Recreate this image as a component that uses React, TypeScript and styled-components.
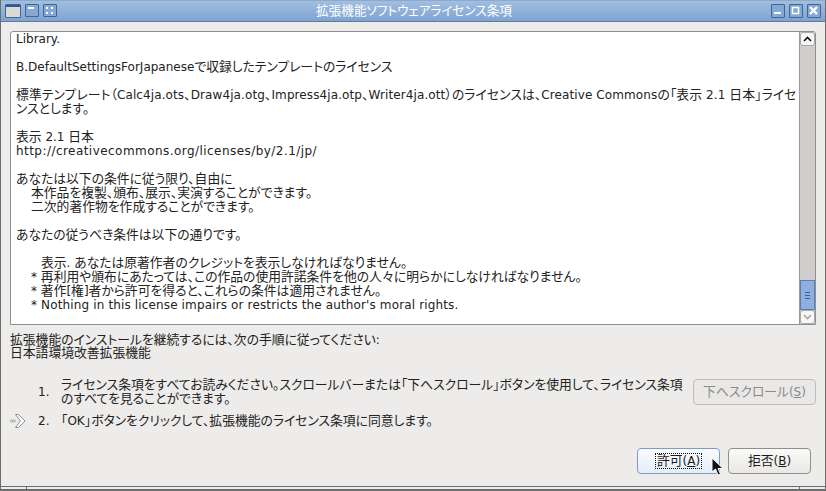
import React from "react";
import styled, { createGlobalStyle } from "styled-components";

const GlobalStyle = createGlobalStyle`
  html, body {
    margin: 0;
    padding: 0;
    background: #edecea;
  }
  body {
    font-family: "DejaVu Sans", "Noto Sans CJK JP", sans-serif;
    font-size: 12px;
    font-feature-settings: "palt";
    color: #1a1a1a;
  }
`;

const Window = styled.div`
  width: 826px;
  height: 491px;
  display: flex;
  flex-direction: column;
  overflow: hidden;
  position: relative;
  box-sizing: border-box;
  border-left: 1px solid #6d6d6d;
  border-right: 1px solid #6d6d6d;
`;

const TitleBar = styled.div`
  height: 22px;
  flex: none;
  box-sizing: border-box;
  margin: 0 -1px;
  display: flex;
  align-items: center;
  padding: 0 5px;
  gap: 4px;
  background: linear-gradient(#a3c0e2, #7fa3d1);
  border-bottom: 1px solid #5f7da3;
  box-shadow: inset 0 1px 0 #8fa9c9;
`;

const Title = styled.div`
  flex: 1;
  text-align: center;
  color: #fff;
  font-size: 12.6px;
  line-height: 14px;
`;

const TitleButton = styled.div<{ $w?: number; $h?: number }>`
  width: ${(p) => p.$w ?? 14}px;
  height: ${(p) => p.$h ?? 14}px;
  box-sizing: border-box;
  border: 1px solid #3f6690;
  border-radius: 1px;
  display: grid;
  place-items: center;
  flex: none;
  background: #87a8d3;
  overflow: hidden;
`;

const Body = styled.div`
  flex: 1;
  display: flex;
  flex-direction: column;
  padding: 9px 9px 0;
  min-height: 0;
`;

const TextBox = styled.div`
  height: 294px;
  flex: none;
  box-sizing: border-box;
  display: flex;
  background: #fff;
  border: 1px solid #8f8f8f;
  border-radius: 3px 3px 0 0;
`;

const LicenseText = styled.div`
  flex: 1;
  padding: 0 5px;
  overflow: hidden;
  color: #222;
`;

const LicenseLine = styled.div<{ $indent?: number; $track?: number }>`
  height: 14px;
  line-height: 14px;
  white-space: pre;
  padding-left: ${(p) => p.$indent ?? 0}px;
  letter-spacing: ${(p) => p.$track ?? 0}px;
`;

// kanji and kana in the reference are set a little larger than the latin text
const Ja = styled.span`
  font-size: 12.8px;
  line-height: 1;
`;

const ScrollBar = styled.div`
  width: 15px;
  flex: none;
  display: flex;
  flex-direction: column;
  background: #cfcecc;
  border-left: 1px solid #9a9a9a;
`;

const ScrollArrow = styled.div`
  height: 14px;
  flex: none;
  background: #f7f7f6;
  border: 1px solid #a8a8a8;
  border-radius: 3px;
  box-sizing: border-box;
  display: grid;
  place-items: center;
`;

const ScrollTrack = styled.div`
  flex: 1;
  display: flex;
  flex-direction: column;
  justify-content: flex-end;
`;

const ScrollThumb = styled.div`
  height: 30px;
  box-sizing: border-box;
  background: #8db0e0;
  border: 1px solid #5c7fae;
  display: flex;
  flex-direction: column;
  align-items: center;
  justify-content: center;
  gap: 2px;
`;

const ThumbLine = styled.div`
  width: 5px;
  height: 1px;
  background: #3d5f8d;
`;

const Intro = styled.div`
  margin-top: 9px;
  line-height: 13px;
  color: #222;
`;

const Steps = styled.div`
  margin-top: 18px;
  display: flex;
  flex-direction: column;
  gap: 7px;
`;

const Step = styled.div`
  display: grid;
  grid-template-columns: 28px 23px 632px 123px;
  align-items: center;
  line-height: 14px;
  color: #222;
  white-space: nowrap;
`;

const StepIcon = styled.div`
  display: flex;
  align-items: center;
`;

const ButtonBase = styled.button<{ $focus?: boolean }>`
  box-sizing: border-box;
  font-family: inherit;
  font-size: 12px;
  font-feature-settings: inherit;
  color: #1a1a1a;
  padding: 0;
  height: 26px;
  border: 1px solid ${(p) => (p.$focus ? "#7f9cc4" : "#8f8f8f")};
  border-radius: 4px;
  background: ${(p) =>
    p.$focus ? "linear-gradient(#fbfcfe, #e4edf8)" : "linear-gradient(#fafaf9, #e9e8e6)"};
  display: flex;
  align-items: center;
  justify-content: center;
`;

const ScrollDownButton = styled(ButtonBase)`
  width: 123px;
  color: #8a8a88;
  border-color: #bdbcba;
  background: #e9e8e6;
`;

const Footer = styled.div`
  margin-top: 19px;
  display: flex;
  justify-content: flex-end;
  gap: 8px;
  padding-right: 5px;
`;

const FooterButton = styled(ButtonBase)`
  width: 83px;
`;

const FocusLabel = styled.span`
  outline: 1px dotted #111;
  padding: 0 1px;
  line-height: 14px;
`;

const Cursor = styled.svg`
  position: absolute;
  left: 710px;
  top: 457px;
`;

const BottomEdge = styled.div`
  position: absolute;
  left: 0;
  right: 0;
  bottom: 0;
  height: 5px;
  box-sizing: border-box;
  border-top: 1px solid #6d6d6d;
  border-bottom: 2px solid #6d6d6d;
  background: #edecea;
  display: flex;
  justify-content: space-between;
  padding: 0 25px;
`;

const EdgeTick = styled.div`
  width: 1px;
  background: #6d6d6d;
`;

const Jp: React.FC<{ text: string }> = ({ text }) => (
  <>
    {text
      .split(/([^\x00-\x7f]+)/)
      .map((part, i) => (i % 2 ? <Ja key={i}>{part}</Ja> : part))}
  </>
);

const lines: { text: string; indent?: number; track?: number }[] = [
  { text: "Library." },
  { text: " " },
  { text: "B.DefaultSettingsForJapaneseで収録したテンプレートのライセンス" },
  { text: " " },
  {
    text: "標準テンプレート（Calc4ja.ots、Draw4ja.otg、Impress4ja.otp、Writer4ja.ott）のライセンスは、Creative Commonsの「表示 2.1 日本」ライセ",
    track: 0.1,
  },
  { text: "ンスとします。" },
  { text: " " },
  { text: "表示 2.1 日本" },
  { text: "http://creativecommons.org/licenses/by/2.1/jp/", track: 0.45 },
  { text: " " },
  { text: "あなたは以下の条件に従う限り、自由に" },
  { text: "本作品を複製、頒布、展示、実演することができます。", indent: 15 },
  { text: "二次的著作物を作成することができます。", indent: 15 },
  { text: " " },
  { text: "あなたの従うべき条件は以下の通りです。" },
  { text: " " },
  { text: "表示. あなたは原著作者のクレジットを表示しなければなりません。", indent: 25 },
  { text: "* 再利用や頒布にあたっては、この作品の使用許諾条件を他の人々に明らかにしなければなりません。", indent: 15 },
  { text: "* 著作[権]者から許可を得ると、これらの条件は適用されません。", indent: 15 },
  { text: "* Nothing in this license impairs or restricts the author's moral rights.", indent: 15, track: 0.14 },
];

const App: React.FC = () => {
  return (
    <Window>
      <GlobalStyle />
      <TitleBar>
        <TitleButton $w={16}>
          <svg width="14" height="12" viewBox="0 0 14 12">
            <rect x="0" y="0" width="14" height="2" fill="#34598a" />
            <rect x="0" y="2" width="14" height="10" fill="#d9d9d6" />
          </svg>
        </TitleButton>
        <TitleButton $h={13}>
          <svg width="12" height="11" viewBox="0 0 12 11">
            <rect x="2" y="2" width="6" height="2" fill="#fff" />
          </svg>
        </TitleButton>
        <TitleButton $h={13}>
          <svg width="12" height="11" viewBox="0 0 12 11">
            <rect x="2" y="2" width="2" height="2" fill="#fff" />
            <rect x="7" y="2" width="2" height="2" fill="#fff" />
            <rect x="2" y="7" width="2" height="2" fill="#fff" />
            <rect x="7" y="7" width="2" height="2" fill="#fff" />
          </svg>
        </TitleButton>
        <Title>拡張機能ソフトウェアライセンス条項</Title>
        <TitleButton>
          <svg width="12" height="12" viewBox="0 0 12 12">
            <rect x="2" y="7" width="7" height="2" fill="#fff" />
          </svg>
        </TitleButton>
        <TitleButton>
          <svg width="12" height="12" viewBox="0 0 12 12">
            <rect x="2.5" y="2.5" width="6" height="6" fill="none" stroke="#fff" strokeWidth="1.5" />
          </svg>
        </TitleButton>
        <TitleButton>
          <svg width="12" height="12" viewBox="0 0 12 12">
            <path d="M2 2 L9 9 M9 2 L2 9" stroke="#fff" strokeWidth="2.4" />
          </svg>
        </TitleButton>
      </TitleBar>
      <Body>
        <TextBox>
          <LicenseText>
            {lines.map((l, i) => (
              <LicenseLine key={i} $indent={l.indent} $track={l.track}>
                <Jp text={l.text} />
              </LicenseLine>
            ))}
          </LicenseText>
          <ScrollBar>
            <ScrollArrow>
              <svg width="9" height="6" viewBox="0 0 9 6">
                <path d="M1 5 L4.5 1.5 L8 5" fill="none" stroke="#111" strokeWidth="1.6" />
              </svg>
            </ScrollArrow>
            <ScrollTrack>
              <ScrollThumb>
                <ThumbLine />
                <ThumbLine />
                <ThumbLine />
              </ScrollThumb>
            </ScrollTrack>
            <ScrollArrow>
              <svg width="9" height="6" viewBox="0 0 9 6">
                <path d="M1 1 L4.5 4.5 L8 1" fill="none" stroke="#a9a9a9" strokeWidth="1.6" />
              </svg>
            </ScrollArrow>
          </ScrollBar>
        </TextBox>
        <Intro>
          <Jp text="拡張機能のインストールを継続するには、次の手順に従ってください:" />
          <br />
          <Jp text="日本語環境改善拡張機能" />
        </Intro>
        <Steps>
          <Step>
            <span />
            <span>1.</span>
            <span>
              <Jp text="ライセンス条項をすべてお読みください。スクロールバーまたは「下へスクロール」ボタンを使用して、ライセンス条項" />
              <br />
              <Jp text="のすべてを見ることができます。" />
            </span>
            <ScrollDownButton disabled>
              <span>
                <Jp text="下へスクロール" />(<u>S</u>)
              </span>
            </ScrollDownButton>
          </Step>
          <Step>
            <StepIcon>
              <svg width="16" height="16" viewBox="0 0 16 16">
                <circle cx="1.5" cy="8" r="1.2" fill="none" stroke="#9a9a9a" strokeWidth="0.8" />
                <circle cx="4.2" cy="8" r="1.2" fill="none" stroke="#9a9a9a" strokeWidth="0.8" />
                <path d="M5.5 1.5 L8.5 1.5 L15 8 L8.5 14.5 L5.5 14.5 L10.5 8 Z" fill="#fff" stroke="#8e8e8e" strokeWidth="1" />
              </svg>
            </StepIcon>
            <span>2.</span>
            <span>
              <Jp text="「OK」ボタンをクリックして、拡張機能のライセンス条項に同意します。" />
            </span>
          </Step>
        </Steps>
        <Footer>
          <FooterButton $focus>
            <FocusLabel>
              <Jp text="許可" />(<u>A</u>)
            </FocusLabel>
          </FooterButton>
          <FooterButton>
            <span>
              <Jp text="拒否" />(<u>B</u>)
            </span>
          </FooterButton>
        </Footer>
      </Body>
      <Cursor width="14" height="20" viewBox="0 0 14 20">
        <path d="M1 1 L1 15 L4.5 12 L7 18 L9.5 17 L7 11.5 L12 11.5 Z" fill="#111" stroke="#fff" strokeWidth="1" />
      </Cursor>
      <BottomEdge>
        <EdgeTick />
        <EdgeTick />
      </BottomEdge>
    </Window>
  );
};

export default App;
